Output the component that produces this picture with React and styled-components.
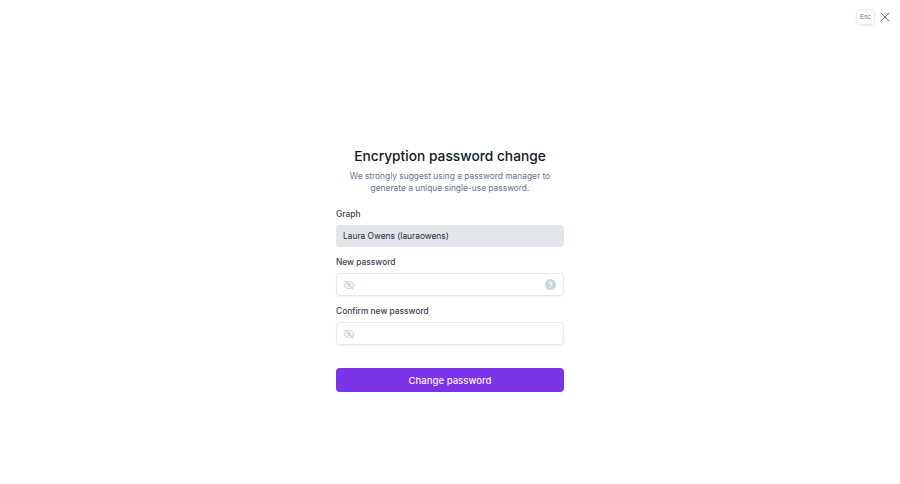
import React from 'react';
import styled, { createGlobalStyle } from 'styled-components';

const GlobalStyle = createGlobalStyle`
  html, body {
    margin: 0;
    padding: 0;
    background: #fff;
    font-family: Inter, "Liberation Sans", sans-serif;
  }
`;

const Page = styled.div`
  position: relative;
  display: flex;
  justify-content: center;
  box-sizing: border-box;
  width: 100%;
  height: 484px;
  padding-top: 146px;
  overflow: hidden;
`;

const CloseArea = styled.div`
  position: absolute;
  top: 9px;
  right: 9px;
  display: flex;
  align-items: center;
  gap: 4px;
`;

const EscKey = styled.div`
  display: flex;
  align-items: center;
  justify-content: center;
  box-sizing: border-box;
  width: 19px;
  height: 16px;
  border: 1px solid #e9ebef;
  border-radius: 5px;
  box-shadow: 0 1px 2px rgba(0, 0, 0, 0.08);
  font-size: 6.5px;
  color: #6b7280;
`;

const CloseButton = styled.button`
  display: flex;
  padding: 0;
  border: 0;
  background: none;
  color: #6b7280;
`;

const Form = styled.form`
  display: flex;
  flex-direction: column;
  width: 228px;
`;

const Title = styled.h1`
  margin: 0;
  font-size: 13.75px;
  line-height: 20px;
  font-weight: 500;
  color: #111827;
  text-align: center;
  white-space: nowrap;
`;

const Subtitle = styled.p`
  margin: 4px 0 0;
  font-size: 8.4px;
  line-height: 12px;
  color: #64748b;
  text-align: center;
  white-space: nowrap;
`;

const Label = styled.label`
  margin-top: ${(p) => p.$top}px;
  font-size: 8.4px;
  line-height: 12px;
  font-weight: 500;
  color: #374151;
`;

const ReadOnlyField = styled.div`
  display: flex;
  align-items: center;
  box-sizing: border-box;
  height: 22px;
  margin-top: 5px;
  padding: 0 7px;
  border-radius: 4px;
  background: #e2e6ea;
  font-size: 8.4px;
  color: #1f2937;
`;

const InputWrap = styled.div`
  display: flex;
  align-items: center;
  justify-content: space-between;
  box-sizing: border-box;
  height: 23px;
  margin-top: 5px;
  padding: 0 7px 0 6px;
  border: 1px solid #e5e7eb;
  border-radius: 4px;
  box-shadow: 0 1px 2px rgba(0, 0, 0, 0.06);
  color: #cbd5e1;
`;

const SubmitButton = styled.button`
  height: 24px;
  margin-top: 23px;
  padding: 0;
  border: 0;
  border-radius: 4px;
  background: #7c33e8;
  color: #f5f0ff;
  font-family: inherit;
  font-size: 9.6px;
  font-weight: 500;
`;

const EyeOff = () => (
  <svg width="12" height="12" viewBox="0 0 24 24" fill="none" stroke="currentColor" strokeWidth="2.2" strokeLinecap="round" strokeLinejoin="round">
    <path d="M2 12s3.6-7 10-7 10 7 10 7-3.6 7-10 7-10-7-10-7z" />
    <circle cx="12" cy="12" r="3" />
    <path d="M4 4l16 16" />
  </svg>
);

const HelpIcon = () => (
  <svg width="11" height="11" viewBox="0 0 24 24">
    <circle cx="12" cy="12" r="12" fill="#cbd5e1" />
    <path d="M8.8 9.2a3.3 3.3 0 0 1 6.4 1c0 2.2-3.2 2.6-3.2 4.2" fill="none" stroke="#fff" strokeWidth="2.4" strokeLinecap="round" />
    <circle cx="12" cy="18.4" r="1.5" fill="#fff" />
  </svg>
);

const CloseIcon = () => (
  <svg width="12" height="12" viewBox="0 0 24 24" fill="none" stroke="currentColor" strokeWidth="2" strokeLinecap="round">
    <path d="M4 4l16 16M20 4L4 20" />
  </svg>
);

export default function App() {
  return (
    <>
      <GlobalStyle />
      <Page>
        <CloseArea>
          <EscKey>Esc</EscKey>
          <CloseButton type="button" aria-label="Close"><CloseIcon /></CloseButton>
        </CloseArea>
        <Form>
          <Title>Encryption password change</Title>
          <Subtitle>
            We strongly suggest using a password manager to
            <br />
            generate a unique single-use password.
          </Subtitle>
          <Label $top={14}>Graph</Label>
          <ReadOnlyField>Laura Owens (lauraowens)</ReadOnlyField>
          <Label $top={9}>New password</Label>
          <InputWrap>
            <EyeOff />
            <HelpIcon />
          </InputWrap>
          <Label $top={9}>Confirm new password</Label>
          <InputWrap>
            <EyeOff />
          </InputWrap>
          <SubmitButton type="button">Change password</SubmitButton>
        </Form>
      </Page>
    </>
  );
}
